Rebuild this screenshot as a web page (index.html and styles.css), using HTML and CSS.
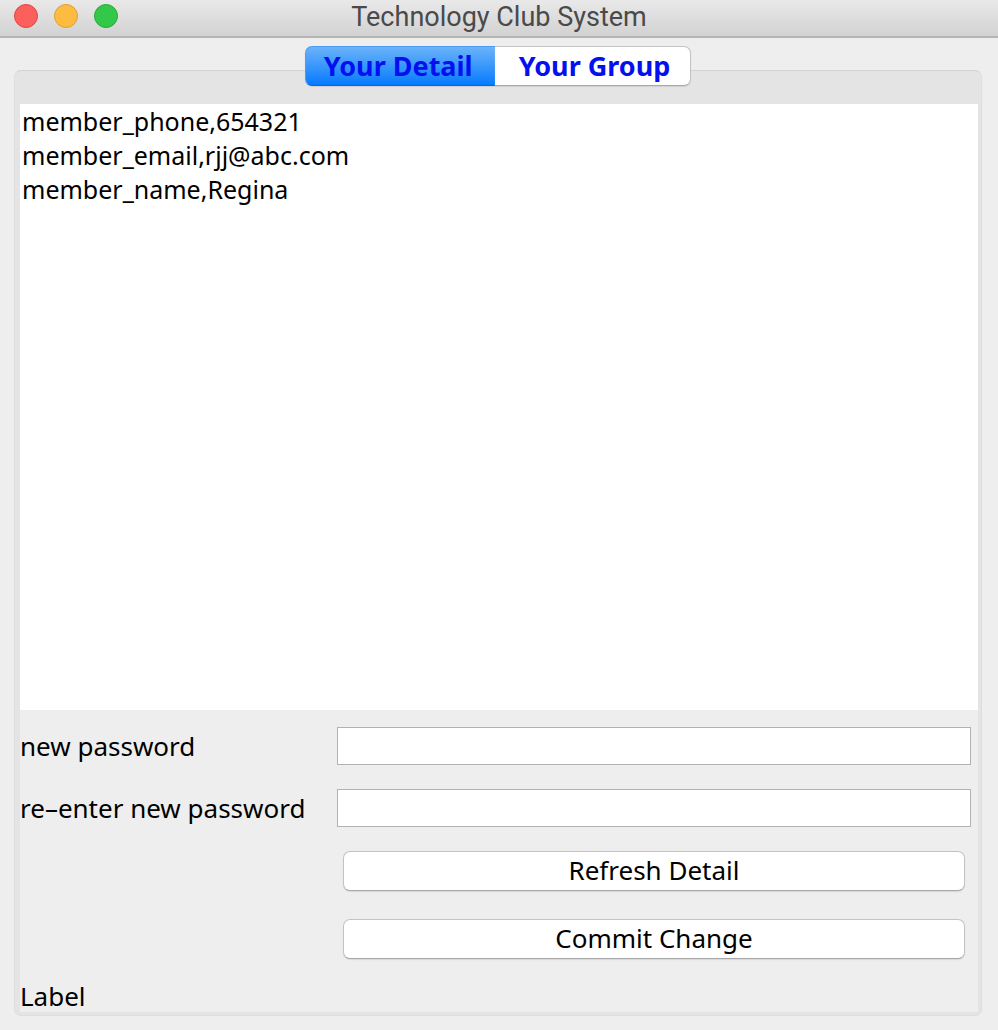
FILE: index.html
```html
<!DOCTYPE html>
<html lang="en">
<head>
<meta charset="utf-8">
<meta name="viewport" content="width=device-width, initial-scale=1">
<title>Technology Club System</title>
<link rel="stylesheet" href="styles.css">
</head>
<body>
<div class="window">
  <header class="titlebar">
    <div class="controls">
      <button class="dot dot-close" type="button" aria-label="Close"></button>
      <button class="dot dot-minimise" type="button" aria-label="Minimise"></button>
      <button class="dot dot-zoom" type="button" aria-label="Zoom"></button>
    </div>
    <h1 class="title">Technology Club System</h1>
  </header>
  <main class="content">
    <div class="tabs" role="tablist">
      <button class="tab tab-active" type="button" role="tab" aria-selected="true">Your Detail</button>
      <button class="tab" type="button" role="tab" aria-selected="false">Your Group</button>
    </div>
    <section class="panel" role="tabpanel">
      <textarea class="details" aria-label="Member details" readonly spellcheck="false">member_phone,654321
member_email,rjj@abc.com
member_name,Regina</textarea>
      <form class="form">
        <div class="fields">
          <label class="label" for="new-password">new password</label>
          <input class="input" id="new-password" type="password">
          <label class="label" for="repeat-password">re–enter new password</label>
          <input class="input" id="repeat-password" type="password">
        </div>
        <div class="actions">
          <button class="button" type="button">Refresh Detail</button>
          <button class="button" type="button">Commit Change</button>
        </div>
        <output class="status">Label</output>
      </form>
    </section>
  </main>
</div>
</body>
</html>
```

FILE: styles.css
```css
* { box-sizing: border-box; }

body {
  margin: 0;
  background: #eeeeee;
  color: #000;
  font-family: "Noto Sans", "Open Sans", sans-serif;
  font-size: 26px;
}

button, input, textarea { font: inherit; color: inherit; }

.window {
  display: flex;
  flex-direction: column;
  min-height: 100vh;
}

.titlebar {
  display: grid;
  grid-template-columns: 1fr auto 1fr;
  align-items: center;
  height: 38px;
  padding: 0 14px 4px;
  background: linear-gradient(#e9e9e9, #d2d2d2);
  border-bottom: 2px solid #b4b4b4;
}

.controls { display: flex; gap: 16px; }

.dot {
  width: 24px;
  height: 24px;
  padding: 0;
  border: 1px solid;
  border-radius: 50%;
}
.dot-close { background: #fc605c; border-color: #e2463f; }
.dot-minimise { background: #fdbc40; border-color: #dfa032; }
.dot-zoom { background: #34c84a; border-color: #27aa35; }

.title {
  margin: 0;
  padding-top: 2px;
  color: #4a4a4a;
  font-family: Roboto, Inter, sans-serif;
  font-size: 27px;
  line-height: 30px;
  font-weight: 400;
}

.content {
  flex: 1;
  display: flex;
  flex-direction: column;
  padding: 8px 16px 14px 14px;
}

.tabs {
  display: flex;
  align-self: center;
  margin-bottom: -16px;
  z-index: 1;
}

.tab {
  height: 40px;
  padding: 0 20px 0 24px;
  border: 1px solid #c3c3c3;
  border-left: 0;
  border-bottom-color: #a8a8a8;
  border-radius: 0 7px 7px 0;
  background: #fff;
  color: #0410f0;
  font-size: 27px;
  font-weight: 700;
  line-height: 36px;
  box-shadow: 0 1px 1px #d0d0d0;
}
.tab-active {
  padding: 0 22px 0 18px;
  border: 1px solid #4a9cf5;
  border-right: 0;
  border-bottom-color: #0a62e8;
  border-radius: 7px 0 0 7px;
  background: linear-gradient(#6bb3fa, #067bff);
}

.panel {
  flex: 1;
  display: flex;
  flex-direction: column;
  padding: 33px 3px 3px 5px;
  border: 1px solid #dedede;
  border-top-color: #d2d2d2;
  border-radius: 7px;
  background: #e4e4e4;
}

.details {
  flex: 1;
  display: block;
  width: 100%;
  min-height: 120px;
  padding: 0 2px;
  border: 0;
  outline: 0;
  resize: none;
  background: #fff;
  font-size: 25px;
  line-height: 34px;
}

.form {
  padding: 17px 7px 0 0;
  background: #eeeeee;
}

.fields {
  display: grid;
  grid-template-columns: minmax(auto, 317px) 1fr;
  row-gap: 24px;
  align-items: center;
}

.label { line-height: 38px; }

.input {
  width: 100%;
  height: 38px;
  padding: 0 6px;
  border: 1px solid #b2b2b2;
  border-radius: 0;
  background: #fff;
}

.actions {
  display: grid;
  gap: 28px;
  margin: 24px 6px 0 323px;
}

.button {
  height: 40px;
  padding: 0 0 2px;
  border: 1px solid #c3c3c3;
  border-bottom-color: #a8a8a8;
  border-radius: 7px;
  background: #fff;
  line-height: 36px;
  box-shadow: 0 1px 1px #d8d8d8;
}

.status {
  display: block;
  margin-top: 21px;
  line-height: 32px;
}
```
